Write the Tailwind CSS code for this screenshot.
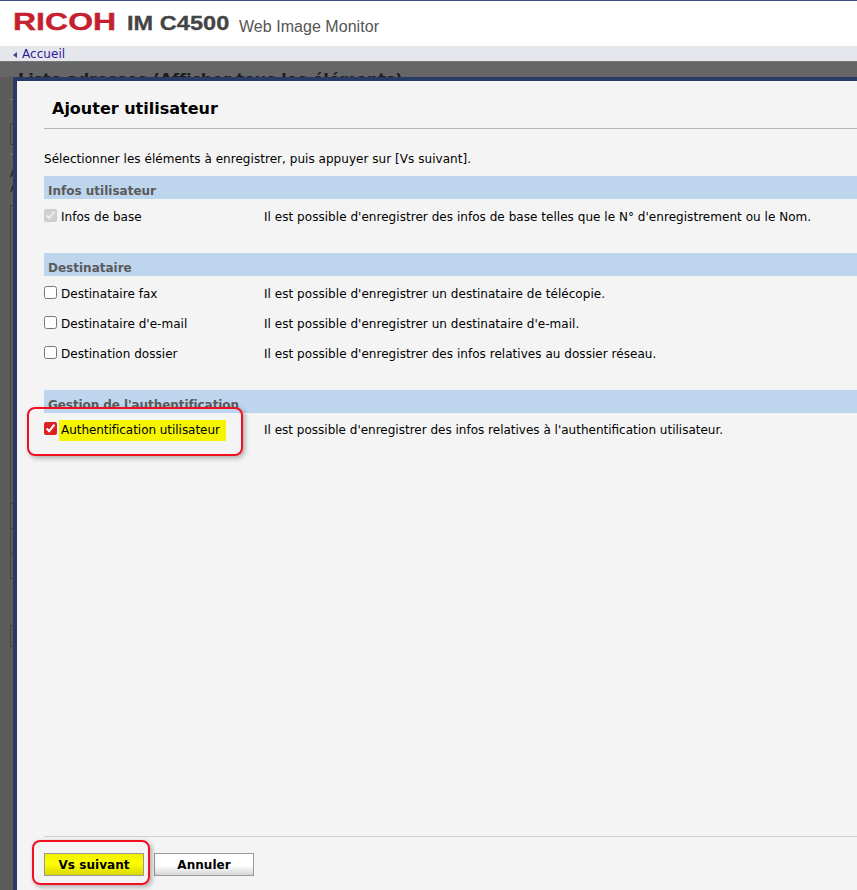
<!DOCTYPE html>
<html lang="fr">
<head>
    <meta charset="UTF-8">
    <title>Web Image Monitor</title>
    <script src="https://cdn.jsdelivr.net/npm/@tailwindcss/browser@4"></script>
</head>
<body class="relative h-[890px] w-[857px] overflow-hidden bg-[#5c5c5c] font-['DejaVu_Sans',sans-serif] text-[12px] tracking-[0.04px] text-black">
    <!-- Header -->
    <header class="h-[46px] border-t border-[#3f4a8a] bg-white flex items-start pl-[13px]">
        <span class="mt-[6px] w-[102px] font-['Liberation_Sans',sans-serif] text-[24px] leading-[30px] font-bold text-[#c4202f] [-webkit-text-stroke:0.4px_#c4202f] origin-left scale-x-[1.33] whitespace-nowrap">RICOH</span>
        <span class="ml-[12px] mt-[8px] font-['Liberation_Sans',sans-serif] text-[21px] leading-[28px] font-bold text-[#444] [-webkit-text-stroke:0.3px_#444] origin-left scale-x-[1.12] w-[100px] whitespace-nowrap">IM C4500</span>
        <span class="ml-[12px] mt-[15px] font-['Liberation_Sans',sans-serif] text-[16px] leading-[22px] text-[#555] whitespace-nowrap">Web Image Monitor</span>
    </header>
    <nav class="h-[15px] bg-[#e6e7ec] flex items-center pl-[13px] gap-[5px] border-b border-[#777] box-content">
        <span class="w-0 h-0 border-y-[3px] border-y-transparent border-r-[4px] border-r-[#3b4a8c] mt-[2px]"></span>
        <a class="mt-[1px] text-[12px] leading-[15px] text-[#2a1a9a]">Accueil</a>
    </nav>

    <!-- Page behind the dialog -->
    <div class="bg-[#666] h-[15px] pl-[18px] pt-[8px] text-[#1c1c1c] text-[16px] leading-[20px] tracking-[-0.05px] font-bold whitespace-nowrap">Liste adresses (Afficher tous les éléments)</div>
    <div class="absolute left-[10px] top-[99px] h-px w-[4px] bg-[#777]"></div>
    <div class="absolute left-[10px] top-[123px] h-[22px] w-[4px] border border-[#444] border-r-0"></div>
    <div class="absolute left-[10px] top-[154px] h-px w-[4px] bg-[#777]"></div>
    <div class="absolute left-[10px] top-[166px] text-[#222] leading-[15px]">A<br>A</div>
    <div class="absolute left-[10px] top-[205px] h-[374px] w-[4px] border-l border-t border-b border-[#444]"></div>
    <div class="absolute left-[10px] top-[503px] h-px w-[4px] bg-[#444]"></div>
    <div class="absolute left-[10px] top-[528px] h-px w-[4px] bg-[#444]"></div>
    <div class="absolute left-[10px] top-[553px] h-px w-[4px] bg-[#444]"></div>
    <div class="absolute left-[10px] top-[608px] h-px w-[4px] bg-[#666]"></div>
    <div class="absolute left-[10px] top-[625px] h-[22px] w-[4px] border border-[#444] border-r-0"></div>

    <!-- Dialog -->
    <div class="absolute left-[13px] top-[77px] h-[813px] w-[860px] border-l-4 border-t-4 border-[#2a3a66] bg-[#f4f4f4] pl-[27px] flex flex-col">
        <div class="h-[48px] border-b border-[#b5b5b5] pl-[8px] pt-[18px] text-[16px] leading-[20px] tracking-normal font-bold">Ajouter utilisateur</div>
        <p class="mt-[22px] leading-[17px]">Sélectionner les éléments à enregistrer, puis appuyer sur [Vs suivant].</p>

        <h3 class="mt-[8px] h-[23px] bg-[#bdd6ee] pl-[4px] pt-[7px] text-[12px] leading-[16px] tracking-normal font-bold text-[#5a5a5a]">Infos utilisateur</h3>
        <div class="mt-[9px] h-[16px] flex items-center">
            <input type="checkbox" checked disabled class="m-0 -mt-[2px] size-[13px] shrink-0">
            <span class="ml-[4px] mt-[2px] w-[203px]">Infos de base</span>
            <span class="mt-[2px] whitespace-nowrap">Il est possible d'enregistrer des infos de base telles que le N° d'enregistrement ou le Nom.</span>
        </div>

        <h3 class="mt-[29px] h-[23px] bg-[#bdd6ee] pl-[4px] pt-[7px] text-[12px] leading-[16px] tracking-normal font-bold text-[#5a5a5a]">Destinataire</h3>
        <div class="mt-[9px] h-[16px] flex items-center">
            <input type="checkbox" class="m-0 -mt-[2px] size-[13px] shrink-0">
            <span class="ml-[4px] mt-[2px] w-[203px]">Destinataire fax</span>
            <span class="mt-[2px] whitespace-nowrap">Il est possible d'enregistrer un destinataire de télécopie.</span>
        </div>
        <div class="mt-[14px] h-[16px] flex items-center">
            <input type="checkbox" class="m-0 -mt-[2px] size-[13px] shrink-0">
            <span class="ml-[4px] mt-[2px] w-[203px]">Destinataire d'e-mail</span>
            <span class="mt-[2px] whitespace-nowrap">Il est possible d'enregistrer un destinataire d'e-mail.</span>
        </div>
        <div class="mt-[14px] h-[16px] flex items-center">
            <input type="checkbox" class="m-0 -mt-[2px] size-[13px] shrink-0">
            <span class="ml-[4px] mt-[2px] w-[203px]">Destination dossier</span>
            <span class="mt-[2px] whitespace-nowrap">Il est possible d'enregistrer des infos relatives au dossier réseau.</span>
        </div>

        <h3 class="mt-[29px] h-[23px] bg-[#bdd6ee] pl-[4px] pt-[7px] text-[12px] leading-[16px] tracking-[-0.08px] font-bold text-[#5a5a5a]">Gestion de l'authentification</h3>
        <div class="mt-[8px] h-[16px] flex items-center">
            <input type="checkbox" checked class="m-0 -mt-[2px] size-[13px] shrink-0 accent-[#e02020]">
            <span class="ml-[2px] mt-[2px] w-[205px]"><span class="inline-block bg-[#f5f500] pl-[2px] pr-[6px] leading-[21px] tracking-[-0.04px]">Authentification utilisateur</span></span>
            <span class="mt-[2px] whitespace-nowrap tracking-normal">Il est possible d'enregistrer des infos relatives à l'authentification utilisateur.</span>
        </div>

        <div class="mt-auto mb-[14px] border-t border-[#cfcfcf] pt-[16px] flex gap-[10px]">
            <button class="h-[23px] w-[100px] border border-[#999] bg-[linear-gradient(#f0f000,#ffff00_45%,#d8d800)] font-bold leading-[20px]">Vs suivant</button>
            <button class="h-[23px] w-[100px] border border-[#999] bg-[linear-gradient(#fff_55%,#d5d5d5)] font-bold leading-[20px]">Annuler</button>
        </div>
    </div>

    <!-- Red annotations -->
    <div class="absolute left-[27px] top-[407px] h-[49px] w-[216px] rounded-[8px] border-2 border-[#f01020] shadow-[2px_2px_5px_rgba(0,0,0,0.3)]"></div>
    <div class="absolute left-[32px] top-[840px] h-[45px] w-[118px] rounded-[8px] border-2 border-[#f01020] shadow-[2px_2px_5px_rgba(0,0,0,0.3)]"></div>
</body>
</html>
